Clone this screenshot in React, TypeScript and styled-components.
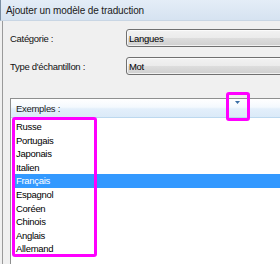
import React from "react";
import styled, { createGlobalStyle } from "styled-components";

const Global = createGlobalStyle`
  html, body { margin: 0; padding: 0; background: #f0f0f0; }
  body { font-family: "Liberation Sans", Arial, sans-serif; }
`;

const Window = styled.div`
  position: relative;
  width: 280px;
  height: 264px;
  overflow: hidden;
  background: #f0f0f0;
  display: flex;
  flex-direction: column;
`;

const TitleBar = styled.div`
  height: 20px;
  flex: none;
  display: flex;
  align-items: center;
  padding-left: 5px;
  border-left: 1px solid #7a8ea3;
  border-bottom: 1px solid #c9d6e4;
  background: linear-gradient(#e4edf7, #d6e3f1);
  color: #1a1a1a;
  font-size: 10px;
  letter-spacing: -0.12px;
`;

const Body = styled.div`
  flex: 1;
  margin-left: 2px;
  border-left: 1px solid #9a9a9a;
  padding: 8px 0 0 7px;
  display: flex;
  flex-direction: column;
`;

const Form = styled.div`
  display: grid;
  grid-template-columns: 116px 1fr;
  row-gap: 10px;
  align-items: center;
`;

const Label = styled.div`
  font-size: 9.5px;
  letter-spacing: -0.3px;
  color: #111;
`;

const Combo = styled.div`
  height: 16px;
  margin-right: -20px;
  border: 1px solid #707070;
  border-radius: 3px;
  display: flex;
  align-items: center;
  padding-left: 2px;
  font-size: 9.5px;
  letter-spacing: -0.3px;
  color: #000;
  background: linear-gradient(#f2f2f2 0%, #ebebeb 50%, #dddddd 51%, #cfcfcf 100%);
  box-shadow: inset 0 0 0 1px rgba(255, 255, 255, 0.7);
`;

const ListBox = styled.div`
  margin-top: 23px;
  margin-right: -20px;
  flex: 1;
  border: 1px solid #8e8f8f;
  border-right: none;
  border-bottom: none;
  background: #fff;
  display: flex;
  flex-direction: column;
`;

const Header = styled.div`
  position: relative;
  height: 18px;
  flex: none;
  display: flex;
  align-items: center;
  padding-left: 5px;
  font-size: 9.5px;
  letter-spacing: -0.3px;
  color: #1a1a1a;
  border-bottom: 1px solid #bcd8ef;
  background: linear-gradient(#ffffff 0%, #f4f9fe 45%, #e3effb 55%, #dbeaf8 100%);
`;

const SortArrow = styled.svg`
  position: absolute;
  left: 224px;
  top: 2px;
`;

const Items = styled.div`
  padding-top: 2px;
  display: flex;
  flex-direction: column;
`;

const Item = styled.div<{ $selected?: boolean }>`
  height: 13.6px;
  line-height: 13.6px;
  margin-left: 4px;
  padding-left: 1px;
  font-size: 9.5px;
  letter-spacing: -0.3px;
  color: ${(p) => (p.$selected ? "#fff" : "#000")};
  background: ${(p) => (p.$selected ? "#3399ff" : "transparent")};
`;

const Mark = styled.div<{ $l: number; $t: number; $w: number; $h: number }>`
  position: absolute;
  left: ${(p) => p.$l}px;
  top: ${(p) => p.$t}px;
  width: ${(p) => p.$w}px;
  height: ${(p) => p.$h}px;
  box-sizing: border-box;
  border: 3px solid #ff00ff;
  border-radius: 3px;
  pointer-events: none;
`;

const langs = [
  "Russe",
  "Portugais",
  "Japonais",
  "Italien",
  "Français",
  "Espagnol",
  "Coréen",
  "Chinois",
  "Anglais",
  "Allemand",
];

export default function App() {
  return (
    <>
      <Global />
      <Window>
        <TitleBar>Ajouter un modèle de traduction</TitleBar>
        <Body>
          <Form>
            <Label>Catégorie :</Label>
            <Combo>Langues</Combo>
            <Label>Type d'échantillon :</Label>
            <Combo>Mot</Combo>
          </Form>
          <ListBox>
            <Header>
              Exemples :
              <SortArrow width="5" height="3" viewBox="0 0 5 3">
                <path d="M0 0h5L2.5 3z" fill="#3a6ea5" />
              </SortArrow>
            </Header>
            <Items>
              {langs.map((l) => (
                <Item key={l} $selected={l === "Français"}>
                  {l}
                </Item>
              ))}
            </Items>
          </ListBox>
        </Body>
        <Mark $l={12} $t={117} $w={85} $h={140} />
        <Mark $l={226} $t={92} $w={24} $h={29} />
      </Window>
    </>
  );
}
